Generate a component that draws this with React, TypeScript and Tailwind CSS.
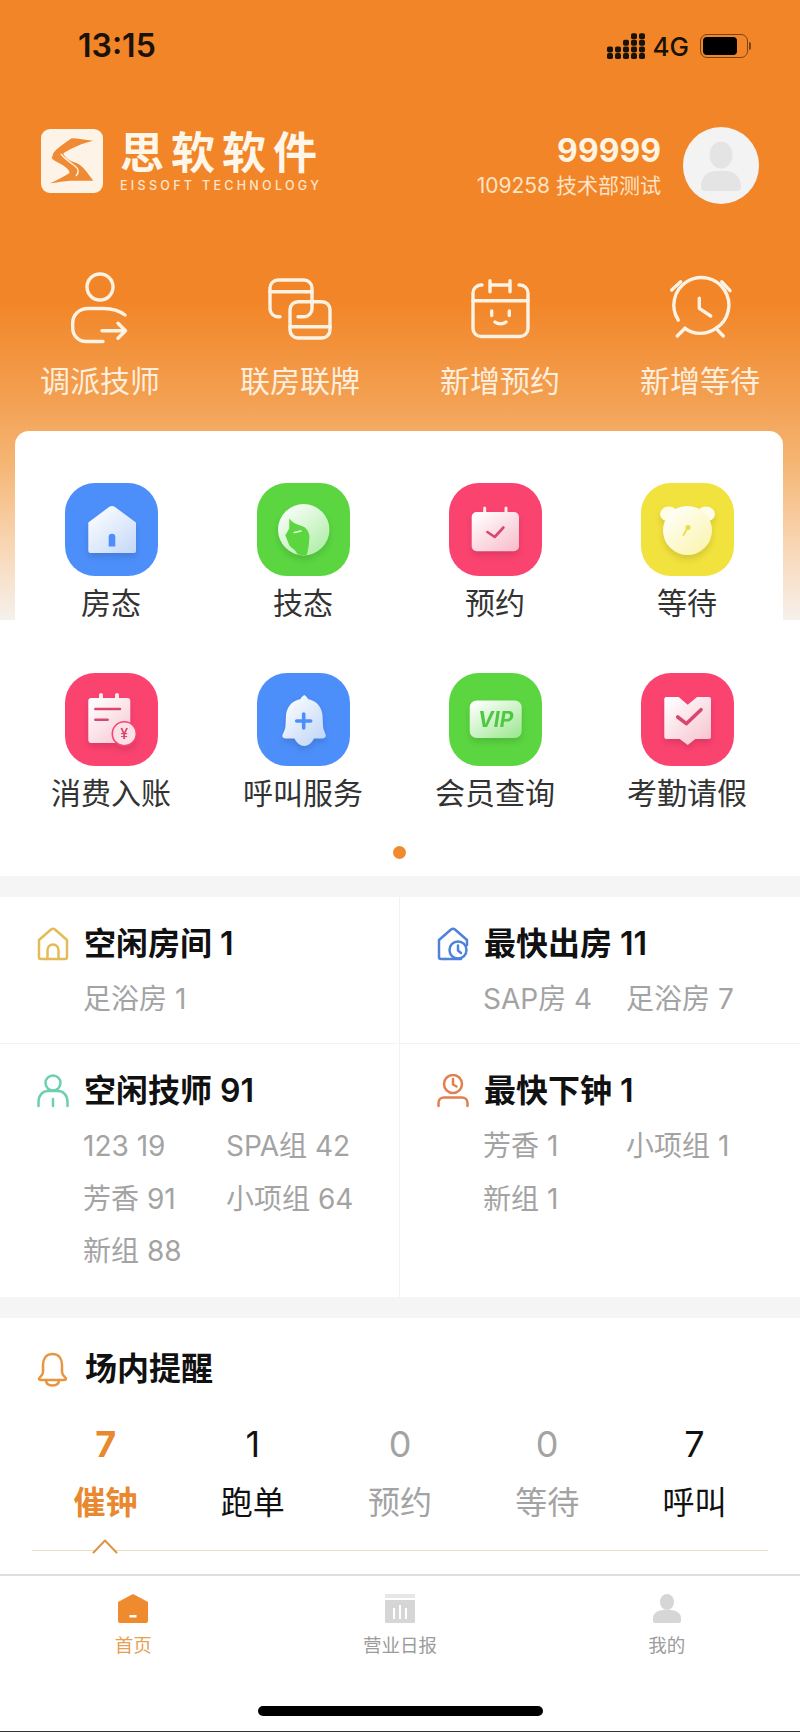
import type { ReactNode } from 'react';

const quickActions = [
  { label: '调派技师', icon: <PersonMoveIcon /> },
  { label: '联房联牌', icon: <LinkRoomIcon /> },
  { label: '新增预约', icon: <SmileCalendarIcon /> },
  { label: '新增等待', icon: <AlarmIcon /> },
];

const menuItems = [
  { label: '房态', bg: 'bg-[#4d8ffa]', icon: <HouseTile /> },
  { label: '技态', bg: 'bg-[#5bd641]', icon: <FaceTile /> },
  { label: '预约', bg: 'bg-[#fb4370]', icon: <CalendarTile /> },
  { label: '等待', bg: 'bg-[#f2e23e]', icon: <BearTile /> },
  { label: '消费入账', bg: 'bg-[#fb4370]', icon: <BillTile /> },
  { label: '呼叫服务', bg: 'bg-[#4d8ffa]', icon: <BellTile /> },
  { label: '会员查询', bg: 'bg-[#5bd641]', icon: <VipTile /> },
  { label: '考勤请假', bg: 'bg-[#fb4370]', icon: <HeartTile /> },
];

const reminders = [
  { n: '7', label: '催钟', cls: 'text-[#e8892f] font-bold' },
  { n: '1', label: '跑单', cls: 'text-[#111]' },
  { n: '0', label: '预约', cls: 'text-[#a3a3a3]' },
  { n: '0', label: '等待', cls: 'text-[#a3a3a3]' },
  { n: '7', label: '呼叫', cls: 'text-[#111]' },
];

function LineSvg({ children }: { children: ReactNode }) {
  return (
    <svg width="72" height="80" viewBox="0 0 72 80" fill="none" stroke="#fdf3e4" strokeWidth="3.4" strokeLinecap="round" strokeLinejoin="round">
      {children}
    </svg>
  );
}

function PersonMoveIcon() {
  return (
    <LineSvg>
      <circle cx="36" cy="19" r="13" />
      <path d="M61 47C55 42.5 47 40.5 40 40.5H24C15 40.5 8.7 47 8.7 55V60C8.7 68 15 73.5 22 73.5H39" />
      <path d="M38 62.7H61M54 55.3L61.5 62.7L54 70.3" />
    </LineSvg>
  );
}

function LinkRoomIcon() {
  return (
    <LineSvg>
      <path d="M16 48.7H14a8 8 0 0 1-8-8V20a8 8 0 0 1 8-8H40a8 8 0 0 1 8 8V40.7a8 8 0 0 1-8 8H34" />
      <path d="M6 23.7H48" />
      <path d="M26 41.7a8 8 0 0 1 8-8H58a8 8 0 0 1 8 8V62a8 8 0 0 1-8 8H34a8 8 0 0 1-8-8Z" />
      <path d="M26 58.7H66" />
    </LineSvg>
  );
}

function SmileCalendarIcon() {
  return (
    <LineSvg>
      <path d="M18 17H17a8 8 0 0 0-8 8V60.5a8 8 0 0 0 8 8H56a8 8 0 0 0 8-8V25a8 8 0 0 0-8-8H55" />
      <path d="M26 12.7V23.7M46 12.7V23.7M26 17H46M9 32.7H64" />
      <path d="M27.7 43V47.5M45.3 43V47.5M31 54C34 56.5 39 56.5 42 54" />
    </LineSvg>
  );
}

function AlarmIcon() {
  return (
    <LineSvg>
      <path d="M14.3 52A27.5 27.5 0 1 1 52 60.3" />
      <path d="M21 60.3C30 67 42 67 52 60.3" />
      <path d="M7.7 22L16.7 13.7M57.7 13.7L66 22.7M13.3 68L21 60.3M59.3 68L52 60.3" />
      <path d="M35.3 30.3V40.3L46.7 48" />
    </LineSvg>
  );
}

function TileSvg({ id, to, children }: { id: string; to: string; children: ReactNode }) {
  return (
    <svg width="93" height="93" viewBox="0 0 93 93" className="drop-shadow-[0_4px_3px_rgba(0,0,0,0.12)]">
      <defs>
        <linearGradient id={id} x1="0.1" y1="0" x2="0.95" y2="1">
          <stop offset="0" stopColor="#ffffff" />
          <stop offset="1" stopColor={to} />
        </linearGradient>
      </defs>
      {children}
    </svg>
  );
}

function HouseTile() {
  return (
    <TileSvg id="house" to="#c5d8f8">
      <path d="M23.3 39.5L44 24Q47 22 50 24L71 39.5V68a2 2 0 0 1-2 2H25.3a2 2 0 0 1-2-2Z" fill="url(#house)" />
      <path d="M43.7 63.5V54a3.3 3.3 0 0 1 6.6 0V63.5Z" fill="#4d8ffa" />
    </TileSvg>
  );
}

function FaceTile() {
  return (
    <TileSvg id="face" to="#a9ecA0">
      <circle cx="46.7" cy="46.7" r="25.7" fill="url(#face)" />
      <path d="M32.3 35.6C36 41 42 42 47.3 44C51 47 53 51 52.3 55.6C52 62 51 68 49.7 72.5L40.7 71.6C38 66 34 65 32.3 62.3L28.3 52.3L32.3 45.6Z" fill="#5bd641" />
      <path d="M37.3 49.5L44 48" stroke="#e8fbe4" strokeWidth="1.6" strokeLinecap="round" fill="none" />
    </TileSvg>
  );
}

function CalendarTile() {
  return (
    <TileSvg id="cal" to="#f7bccb">
      <path d="M35.7 25V30M57 25V30" stroke="#fde7ec" strokeWidth="3" strokeLinecap="round" />
      <rect x="22.7" y="29" width="47.3" height="39.3" rx="5" fill="url(#cal)" />
      <path d="M38.4 49L45.7 54L54.4 44.5" fill="none" stroke="#d8476e" strokeWidth="2.6" strokeLinecap="round" strokeLinejoin="round" />
    </TileSvg>
  );
}

function BearTile() {
  return (
    <TileSvg id="bear" to="#fbf4a8">
      <ellipse cx="28" cy="31" rx="9" ry="7.5" fill="#fffde8" />
      <ellipse cx="65" cy="31" rx="9" ry="7.5" fill="#fffde8" />
      <circle cx="46.5" cy="47.5" r="24.5" fill="url(#bear)" />
      <circle cx="47" cy="44.5" r="2.6" fill="#ecdc4a" />
      <path d="M46 46L42.5 52" stroke="#ecdc4a" strokeWidth="1.8" strokeLinecap="round" />
    </TileSvg>
  );
}

function BillTile() {
  return (
    <TileSvg id="bill" to="#f7c6d3">
      <path d="M36 22V27M52 22V27" stroke="#fde7ec" strokeWidth="4" strokeLinecap="round" />
      <rect x="23.3" y="25" width="42" height="45" rx="3" fill="url(#bill)" />
      <path d="M30.3 36H55M30.3 46.7H42.7" stroke="#d8476e" strokeWidth="2.4" strokeLinecap="round" />
      <circle cx="59.3" cy="60.7" r="12" fill="#fbe0e7" stroke="#fb4370" strokeWidth="1.6" />
      <text x="59.3" y="66" textAnchor="middle" fontSize="14" fontWeight="600" fill="#d8476e">¥</text>
    </TileSvg>
  );
}

function BellTile() {
  return (
    <TileSvg id="bell" to="#bcd3f8">
      <path d="M47.3 22Q50 23.5 51 26C60 28 64.5 34 65.5 42L66 53C66.5 58 68.5 60 69 63Q68 65.5 65 65.5H57C55 70 51 73 47.3 73C43.5 73 39.5 70 37.5 65.5H29Q25.7 65.5 25.2 63C26 60 28 58 28.5 53L29 42C30 34 34.5 28 43.5 26Q44.5 23.5 47.3 22Z" fill="url(#bell)" />
      <path d="M46.7 41V55M39.7 48H53.7" stroke="#4d8ffa" strokeWidth="3.6" strokeLinecap="round" />
    </TileSvg>
  );
}

function VipTile() {
  return (
    <TileSvg id="vip" to="#9be78e">
      <rect x="20.7" y="27.4" width="52" height="37.6" rx="7" fill="url(#vip)" />
      <text x="46.7" y="54" textAnchor="middle" fontSize="21" fontWeight="700" fontStyle="italic" fill="#4fc743">VIP</text>
    </TileSvg>
  );
}

function HeartTile() {
  return (
    <TileSvg id="heart" to="#f6c2cf">
      <path d="M23.3 26a2 2 0 0 1 2-2H37.7L46.7 31.7L56 24H68a2 2 0 0 1 2 2V64a2 2 0 0 1-2 2H54.3L46.7 72L38.7 66H25.3a2 2 0 0 1-2-2Z" fill="url(#heart)" />
      <path d="M36.7 44L45.3 50.7L60 36.7" fill="none" stroke="#d8476e" strokeWidth="3.6" strokeLinecap="round" strokeLinejoin="round" />
    </TileSvg>
  );
}

function StatIcon({ kind }: { kind: 'room' | 'roomClock' | 'tech' | 'techClock' }) {
  const color = { room: '#e3bb57', roomClock: '#4f82db', tech: '#6dcfae', techClock: '#e27f4e' }[kind];
  return (
    <svg width="32" height="34" viewBox="0 0 32 34" fill="none" stroke={color} strokeWidth="2.5" strokeLinecap="round" strokeLinejoin="round" className="shrink-0">
      {kind === 'room' && (
        <>
          <path d="M2 13L14 2.5Q16 1 18 2.5L30 13V30a2 2 0 0 1-2 2H4a2 2 0 0 1-2-2Z" />
          <path d="M10.5 32V23a5.5 5.5 0 0 1 11 0V32" />
        </>
      )}
      {kind === 'roomClock' && (
        <>
          <path d="M2 13L14 2.5Q16 1 18 2.5L30 13V18M8 32H4a2 2 0 0 1-2-2V13" />
          <path d="M8 32H24" />
          <circle cx="21" cy="23" r="8.5" />
          <path d="M21 18.5V23.5L24 26" />
        </>
      )}
      {kind === 'tech' && (
        <>
          <circle cx="16" cy="9" r="7.5" />
          <path d="M1.5 32V28C1.5 21 6 17 11 17H21C26 17 30.5 21 30.5 28V32" />
          <path d="M16 25V32" />
        </>
      )}
      {kind === 'techClock' && (
        <>
          <circle cx="16" cy="10" r="9" />
          <path d="M16 5V10.5L19.5 12.5" />
          <path d="M1.5 32V29C1.5 25.5 4 23.5 7 23.5H25C28 23.5 30.5 25.5 30.5 29V32" />
        </>
      )}
    </svg>
  );
}

function StatCell({ kind, title, items, className }: { kind: 'room' | 'roomClock' | 'tech' | 'techClock'; title: string; items: string[]; className: string }) {
  return (
    <div className={className}>
      <div className="flex items-center gap-[15px] pl-[37px] h-[40px]">
        <StatIcon kind={kind} />
        <span className="text-[32px] leading-[40px] font-semibold text-[#111] whitespace-nowrap">{title}</span>
      </div>
      <div className="grid grid-cols-[143px_1fr] pl-[83px] mt-[9px]">
        {items.map((it) => (
          <span key={it} className="text-[28px] leading-[52.5px] text-[#a3a3a3] whitespace-nowrap">{it}</span>
        ))}
      </div>
    </div>
  );
}

function SignalIcon() {
  const cols = [
    { x: 0, rows: [0, 1] },
    { x: 8, rows: [0, 1] },
    { x: 16, rows: [0, 1, 2] },
    { x: 24, rows: [0, 1, 2, 3] },
    { x: 32, rows: [0, 1, 2, 3] },
  ];
  return (
    <svg width="38" height="26" viewBox="0 0 38 26" fill="#1a1208">
      {cols.map((c) => c.rows.map((r) => <rect key={`${c.x}-${r}`} x={c.x} y={20 - r * 6.6} width="6" height="6" rx="1.8" />))}
    </svg>
  );
}

export default function App() {
  return (
    <div className="w-[800px] h-[1732px] overflow-hidden flex flex-col bg-white bg-[linear-gradient(#f28527_0,#f28527_300px,#f3a052_400px,#f5b878_470px,#f8d4b0_540px,#f6f1ec_620px)] bg-no-repeat bg-[length:100%_620px] font-['Inter','Noto_Sans_CJK_SC',sans-serif]">
      {/* status bar */}
      <div className="h-[92px] flex items-center justify-between pl-[78px] pr-[49px]">
        <span className="text-[32px] font-semibold text-[#1a1208]">13:15</span>
        <div className="flex items-center">
          <SignalIcon />
          <span className="ml-[8px] text-[26px] font-medium text-[#1a1208]">4G</span>
          <div className="ml-[11px] flex items-center">
            <div className="w-[48px] h-[24px] rounded-[7px] border border-[#7a4412] p-[2px]">
              <div className="w-[34px] h-full rounded-[4px] bg-black" />
            </div>
            <div className="w-[2px] h-[8px] ml-[1px] rounded-r bg-[#7a4412]" />
          </div>
        </div>
      </div>

      {/* brand + user */}
      <div className="flex items-start justify-between pl-[41px] pr-[41px] pt-[35px]">
        <div className="flex items-center gap-[17px] mt-[2px]">
          <div className="w-[62px] h-[64px] rounded-[9px] bg-[#fdf3e6]">
            <svg width="62" height="64" viewBox="0 0 62 64">
              <path d="M52.3 11.7C44 11 37 9.5 30.7 9.3C24 14 16 19 12.3 24.3L10.7 29.3C14 33 21 35 24 37.7C27 40 29 42 28.3 44.3C22 48 15 52 9 54.3C16 53.5 23 52 29 51.7H52.3C48 46 44 40 39 36C35 33 31 33 28.3 31C25.5 29 23 27 22.3 24.3C30 19 42 14 52.3 11.7Z" fill="#ef8a35" />
              <path d="M20 25C24 30 30 34 34 37C38 40 38 44 35 47" fill="none" stroke="#fdf3e6" strokeWidth="1.5" />
            </svg>
          </div>
          <div className="flex flex-col">
            <span className="text-[44px] leading-[46px] tracking-[7px] font-bold text-[#fff6ea] whitespace-nowrap">思软软件</span>
            <span className="mt-[3px] text-[12.5px] leading-[14px] font-medium tracking-[3.3px] text-[#fde6cc] whitespace-nowrap">EISSOFT TECHNOLOGY</span>
          </div>
        </div>
        <div className="flex items-center gap-[22px]">
          <div className="flex flex-col items-end">
            <span className="text-[32px] leading-[38px] font-bold text-[#fff3e2]">99999</span>
            <span className="mt-[3px] text-[21px] leading-[26px] text-[#fde3c6] whitespace-nowrap">109258 技术部测试</span>
          </div>
          <div className="w-[76px] h-[77px] rounded-full bg-[#f3f3f3] flex items-center justify-center">
            <svg width="44" height="50" viewBox="0 0 44 50" fill="#e4e4e4">
              <ellipse cx="22" cy="14" rx="11.5" ry="13.5" />
              <path d="M2 46C2 36 8 31 16 30H28C36 31 42 36 42 46Q42 50 38 50H6Q2 50 2 46Z" />
            </svg>
          </div>
        </div>
      </div>

      {/* quick actions */}
      <div className="grid grid-cols-4 mt-[64px]">
        {quickActions.map((a) => (
          <div key={a.label} className="flex flex-col items-center">
            {a.icon}
            <span className="mt-[15px] text-[30px] leading-[36px] text-[#fdeedd] whitespace-nowrap">{a.label}</span>
          </div>
        ))}
      </div>

      {/* menu card */}
      <div className="ml-[15px] mr-[17px] mt-[32px] pt-[52px] bg-white rounded-t-[14px]">
        <div className="grid grid-cols-4 gap-y-[52px]">
          {menuItems.map((m) => (
            <div key={m.label} className="flex flex-col items-center">
              <div className={`w-[93px] h-[93px] rounded-[30px] ${m.bg}`}>{m.icon}</div>
              <span className="mt-[9px] text-[30px] leading-[36px] text-[#333] whitespace-nowrap">{m.label}</span>
            </div>
          ))}
        </div>
        <div className="flex justify-center mt-[35px] pb-[17px]">
          <div className="w-[13px] h-[13px] rounded-full bg-[#ef8a2e]" />
        </div>
      </div>

      <div className="h-[21px] bg-[#f5f5f5]" />

      {/* room and tech stats */}
      <div className="grid grid-cols-2 grid-rows-[147px_253px] h-[400px]">
        <StatCell kind="room" title="空闲房间 1" items={['足浴房 1']} className="pt-[27px] border-r border-b border-[#f2f2f2]" />
        <StatCell kind="roomClock" title="最快出房 11" items={['SAP房 4', '足浴房 7']} className="pt-[27px] border-b border-[#f2f2f2]" />
        <StatCell kind="tech" title="空闲技师 91" items={['123 19', 'SPA组 42', '芳香 91', '小项组 64', '新组 88']} className="pt-[27px] border-r border-[#f2f2f2]" />
        <StatCell kind="techClock" title="最快下钟 1" items={['芳香 1', '小项组 1', '新组 1']} className="pt-[27px]" />
      </div>

      <div className="h-[21px] bg-[#f5f5f5]" />

      {/* reminders */}
      <div className="px-[32px] pt-[31px]">
        <div className="flex items-center gap-[17px] pl-[5px] h-[40px]">
          <svg width="31" height="35" viewBox="0 0 31 35" fill="none" stroke="#e9953f" strokeWidth="2.5" strokeLinecap="round" strokeLinejoin="round">
            <path d="M15.5 2C9 2 6 7 6 13V20C6 23 3 25 2 26.5Q2 28 4 28H27Q29 28 29 26.5C28 25 25 23 25 20V13C25 7 22 2 15.5 2Z" />
            <path d="M9 28C9 32 12 33.5 15.5 33.5C19 33.5 22 32 22 28" />
          </svg>
          <span className="text-[32px] leading-[40px] font-semibold text-[#111]">场内提醒</span>
        </div>
        <div className="grid grid-cols-5 mt-[33px]">
          {reminders.map((r) => (
            <div key={r.label} className={`flex flex-col items-center ${r.cls}`}>
              <span className="text-[36px] leading-[44px]">{r.n}</span>
              <span className="mt-[17px] text-[32px] leading-[40px]">{r.label}</span>
            </div>
          ))}
        </div>
        <div className="relative mt-[27px] h-[1px] bg-[#e9dfc6]">
          <svg width="26" height="15" viewBox="0 0 26 15" fill="#fff" stroke="#dd9545" strokeWidth="2" strokeLinecap="round" strokeLinejoin="round" className="absolute left-[60px] top-[-11px]">
            <path d="M1.5 13.5L13 1.5L24.5 13.5" />
          </svg>
        </div>
      </div>

      {/* tab bar */}
      <div className="mt-[23px] border-t-2 border-[#dedede] grid grid-cols-3 pt-[18px]">
        <div className="flex flex-col items-center">
          <svg width="30" height="29" viewBox="0 0 30 29" fill="#ef8a2e">
            <path d="M0 8L13 1Q15 -0.5 17 1L30 8V27a2 2 0 0 1-2 2H2a2 2 0 0 1-2-2Z" />
            <rect x="11.5" y="21" width="7" height="2.5" fill="#fff" />
          </svg>
          <span className="mt-[10px] text-[18.5px] leading-[24px] text-[#e6a055]">首页</span>
        </div>
        <div className="flex flex-col items-center">
          <svg width="30" height="29" viewBox="0 0 30 29" fill="#d6d6d6">
            <rect x="0" y="0" width="30" height="4" opacity="0.6" />
            <rect x="0" y="6" width="30" height="23" rx="1" />
            <path d="M9 14V25M15 11V25M21 14V25" stroke="#fff" strokeWidth="2" />
          </svg>
          <span className="mt-[10px] text-[18.5px] leading-[24px] text-[#9c9c9c]">营业日报</span>
        </div>
        <div className="flex flex-col items-center">
          <svg width="28" height="29" viewBox="0 0 28 29" fill="#d6d6d6">
            <ellipse cx="14" cy="8" rx="7" ry="8" />
            <path d="M0 27V24C0 19 5 16.5 10 16H18C23 16.5 28 19 28 24V27Q28 29 26 29H2Q0 29 0 27Z" />
          </svg>
          <span className="mt-[10px] text-[18.5px] leading-[24px] text-[#9c9c9c]">我的</span>
        </div>
      </div>

      {/* home indicator */}
      <div className="mt-[49px] mx-auto w-[285px] h-[10px] rounded-full bg-black" />
      <div className="mt-auto h-[1px] bg-[#333]" />
    </div>
  );
}
